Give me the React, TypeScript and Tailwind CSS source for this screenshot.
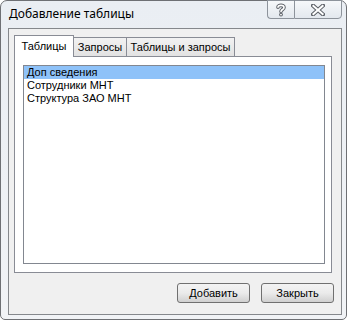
import React from "react";

const body = { fontFamily: '"Liberation Sans", Arial, sans-serif' };
const title = { fontFamily: '"Noto Sans", "Open Sans", sans-serif' };

function HelpGlyph() {
  return (
    <svg width="12" height="14" viewBox="0 0 12 14">
      <path d="M3 4.2 C3 1.8 9 1.6 9 4.4 C9 6.4 6 6.6 6 8.6" fill="none" stroke="#5d6168" strokeWidth="3.6" strokeLinecap="round" />
      <circle cx="6" cy="11.6" r="1.9" fill="#5d6168" />
      <path d="M3 4.2 C3 1.8 9 1.6 9 4.4 C9 6.4 6 6.6 6 8.6" fill="none" stroke="#ffffff" strokeWidth="1.6" strokeLinecap="round" />
      <circle cx="6" cy="11.6" r="0.9" fill="#ffffff" />
    </svg>
  );
}

function CloseGlyph() {
  return (
    <svg width="14" height="12" viewBox="0 0 14 12">
      <path d="M2 1.5 L12 10.5 M12 1.5 L2 10.5" stroke="#5d6168" strokeWidth="4" strokeLinecap="square" />
      <path d="M2.4 1.9 L11.6 10.1 M11.6 1.9 L2.4 10.1" stroke="#ffffff" strokeWidth="2" strokeLinecap="square" />
    </svg>
  );
}

export default function App() {
  return (
    <div className="w-[347px] h-[320px] bg-white overflow-hidden">
      <div className="relative w-[347px] h-[320px] rounded-t-[7px] rounded-b-[5px] border border-[#6e7074] bg-gradient-to-b from-[#eaeef3] to-[#f1f3f6] flex flex-col">
        {/* title bar */}
        <div className="h-[27px] flex items-center pl-[8px] pb-[1px] text-[12px] text-black" style={title}>
          Добавление таблицы
        </div>
        {/* caption buttons */}
        <div className="absolute left-[266px] top-[-1px] flex h-[19px]">
          <div className="w-[27px] h-[19px] flex items-center justify-center border border-[#8d939b] border-r-0 rounded-bl-[4px] bg-gradient-to-b from-[#f6f8fa] to-[#e3e8ee]">
            <HelpGlyph />
          </div>
          <div className="w-[48px] h-[19px] flex items-center justify-center border border-[#8d939b] rounded-br-[4px] bg-gradient-to-b from-[#f6f8fa] to-[#e3e8ee]">
            <CloseGlyph />
          </div>
        </div>
        {/* client area */}
        <div className="ml-[7px] w-[334px] h-[287px] border border-[#85888c] bg-[#f0f0f0] flex flex-col text-[11px] text-black" style={body}>
          {/* tabs */}
          <div className="mt-[6px] ml-[5px] h-[21px] flex items-end">
            <div className="relative z-10 -mb-px w-[60px] h-[22px] border border-b-0 border-[#898c95] bg-white flex items-center justify-center pb-[1px]">
              Таблицы
            </div>
            <div className="-ml-px w-[54px] h-[19px] border border-b-0 border-[#898c95] bg-gradient-to-b from-[#f2f2f2] to-[#e2e2e2] flex items-center justify-center">
              Запросы
            </div>
            <div className="-ml-px w-[109px] h-[19px] border border-b-0 border-[#898c95] bg-gradient-to-b from-[#f2f2f2] to-[#e2e2e2] flex items-center justify-center">
              Таблицы и запросы
            </div>
          </div>
          {/* tab panel */}
          <div className="ml-[5px] w-[318px] h-[217px] border border-[#898c95] bg-white pt-[8px] pl-[8px]">
            <div className="w-[302px] h-[199px] border border-[#828790] bg-white flex flex-col">
              <div className="h-[13px] bg-[#8ec2f9] pl-[3px] flex items-center leading-none">Доп сведения</div>
              <div className="h-[13px] pl-[3px] flex items-center leading-none">Сотрудники МНТ</div>
              <div className="h-[13px] pl-[3px] flex items-center leading-none">Структура ЗАО МНТ</div>
            </div>
          </div>
          {/* buttons */}
          <div className="mt-[10px] flex justify-end gap-[11px] pr-[7px]">
            <div className="w-[73px] h-[20px] rounded-[3px] border border-[#707070] bg-gradient-to-b from-[#f3f3f3] via-[#ebebeb] to-[#d0d0d0] flex items-center justify-center">
              Добавить
            </div>
            <div className="w-[73px] h-[20px] rounded-[3px] border border-[#707070] bg-gradient-to-b from-[#f3f3f3] via-[#ebebeb] to-[#d0d0d0] flex items-center justify-center">
              Закрыть
            </div>
          </div>
        </div>
      </div>
    </div>
  );
}
